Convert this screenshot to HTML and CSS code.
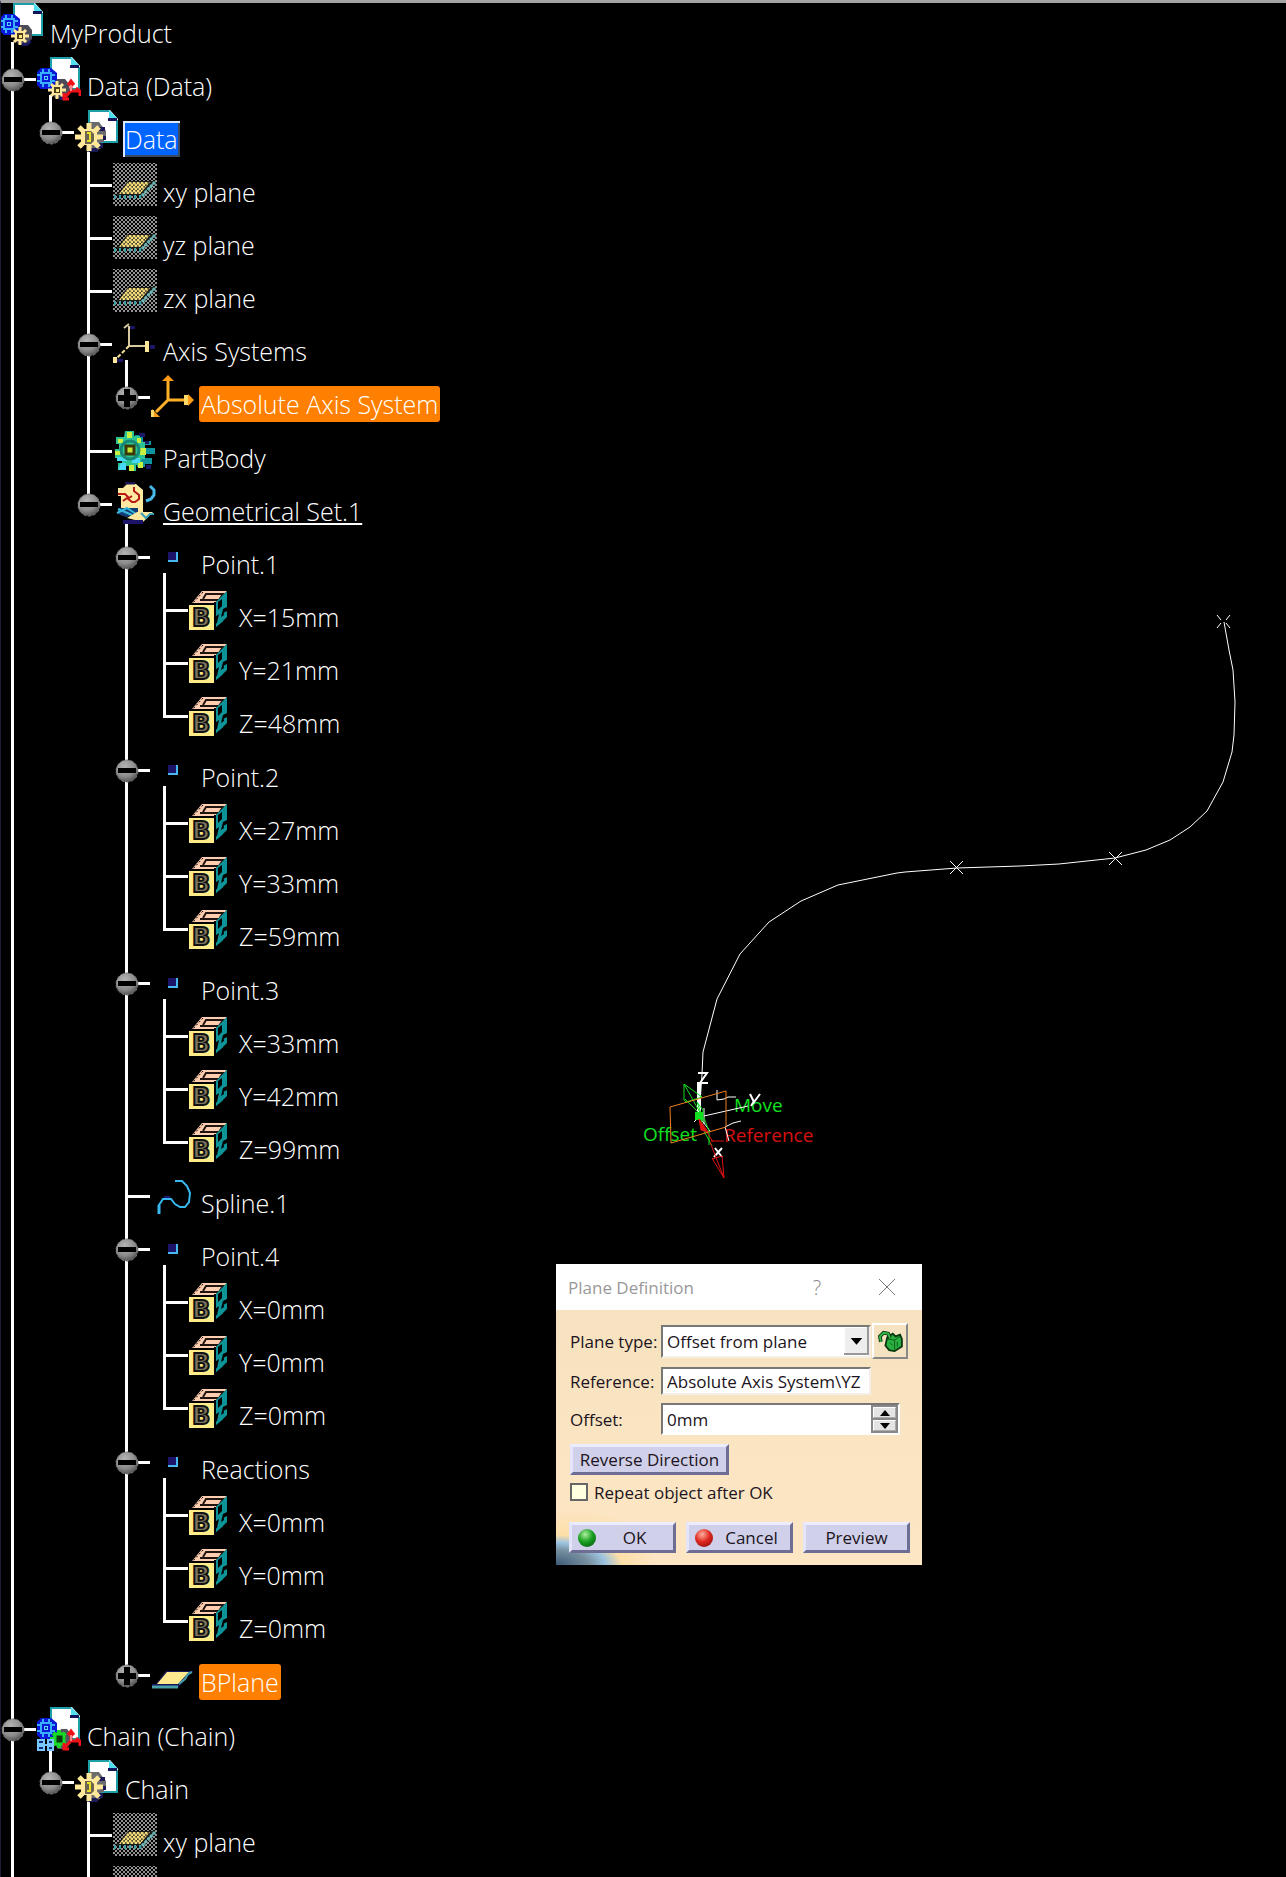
FILE: index.html
```html
<!DOCTYPE html>
<html lang="en">
<head>
<meta charset="utf-8">
<title>MyProduct</title>
<link rel="stylesheet" href="styles.css">
</head>
<body>
<svg class="defs" aria-hidden="true">
  <defs>
    <radialGradient id="steel" cx="40%" cy="30%" r="75%">
      <stop offset="0" stop-color="#b4b4b4"/><stop offset=".6" stop-color="#8c8c8c"/><stop offset="1" stop-color="#4c4c4c"/>
    </radialGradient>
    <pattern id="dots" width="4" height="4" patternUnits="userSpaceOnUse">
      <circle cx="1" cy="1" r="1" fill="#c4c4c4"/><circle cx="3" cy="3" r="1" fill="#c4c4c4"/>
    </pattern>
    <pattern id="holes" width="4" height="4" patternUnits="userSpaceOnUse">
      <rect width="4" height="4" fill="#4c4630"/><circle cx="1" cy="1" r="1.4" fill="#f4dc78"/><circle cx="3" cy="3" r="1.4" fill="#f4dc78"/>
    </pattern>
    <symbol id="minus" viewBox="0 0 24 24">
      <circle cx="12" cy="12" r="11" fill="url(#steel)" stroke="#777" stroke-dasharray="3 2"/>
      <rect x="3" y="9" width="18" height="5" fill="#000"/>
    </symbol>
    <symbol id="plus" viewBox="0 0 24 24">
      <circle cx="12" cy="12" r="11" fill="url(#steel)" stroke="#777" stroke-dasharray="3 2"/>
      <path d="M9 3h6v6h6v6h-6v6H9v-6H3V9h6z" fill="#000"/>
    </symbol>
    <symbol id="sheet" viewBox="0 0 44 44">
      <path d="M13 0h22l8 9v24H13z" fill="#fff"/>
      <path d="M14 33V1h20" fill="none" stroke="#1d9fa8" stroke-width="2"/>
      <path d="M42 10v22H14" fill="none" stroke="#1d9fa8" stroke-width="2"/>
      <path d="M34 0l9 9h-9z" fill="#4fe0f0"/>
      <path d="M33 8h9v3h-9z" fill="#14145a"/>
    </symbol>
    <symbol id="bluegear" viewBox="0 0 44 44">
      <path d="M4 11h10l6 5v11l-6 5H4l-5-5V16z" fill="#0818d8"/>
      <path d="M4 16h10v10H4zM6 12v4M12 12v4M6 26v4M12 26v4M0 18h4M0 24h4M14 18h4M14 24h4" fill="none" stroke="#38b0ff" stroke-width="2"/>
      <rect x="7" y="19" width="4" height="4" fill="#58d8ff"/>
      <rect x="8" y="20" width="2" height="2" fill="#0818d8"/>
    </symbol>
    <symbol id="goldgear" viewBox="0 0 44 44">
      <path d="M20 22h8l4 5v9l-5 5h-9l-4-6z" fill="#4c4c58"/>
      <path d="M22 40h5l4-4v4l-4 3h-5z" fill="#1a1a60"/>
      <path d="M20 24v18M11 33h18M14 27l12 12M26 27L14 39" stroke="#ffe89a" stroke-width="3"/>
      <rect x="15" y="28" width="10" height="10" fill="#ffe89a"/>
      <rect x="17" y="30" width="6" height="6" fill="#4a3c20"/>
      <rect x="19" y="32" width="3" height="3" fill="#ffe97a"/>
    </symbol>
    <symbol id="product" viewBox="0 0 44 44">
      <use href="#sheet"/><use href="#bluegear"/><use href="#goldgear"/>
    </symbol>
    <symbol id="redaxis" viewBox="0 0 44 44">
      <path d="M34 25v9l-6 6M34 34h8M31 28l3-4 3 4M39 31l4 3v5M27 36v6h5" fill="none" stroke="#f01018" stroke-width="3"/>
      <path d="M34 28v6" stroke="#fff" stroke-width="1"/>
    </symbol>
    <symbol id="dataproduct" viewBox="0 0 44 44">
      <use href="#product"/><use href="#redaxis"/>
    </symbol>
    <symbol id="chainproduct" viewBox="0 0 44 44">
      <use href="#sheet"/><use href="#bluegear"/>
      <path d="M24 22h6l4 5v9l-5 6h-8l-4-6z" fill="#55555f"/>
      <path d="M22 23v18M13 32h9M16 26l12 12M28 26L16 38" stroke="#18d828" stroke-width="4"/>
      <rect x="18" y="27" width="9" height="10" fill="#0a3a10" stroke="#18d828" stroke-width="3"/>
      <use href="#redaxis"/>
      <path d="M1 33h6v4H1zM11 33h5v4h-5zM1 39h6v4H1zM11 39h5v4h-5zM6 38h5" fill="#0c2c80" stroke="#78c8ff" stroke-width="2"/>
    </symbol>
    <symbol id="part" viewBox="0 0 44 44">
      <use href="#sheet"/>
      <path d="M14 12h10l3 4 4 5v5h-2v6h-3v6l-6 4h-8z" fill="#6c6c6c"/>
      <path d="M24 17h6v4h-6zM25 26h6v4h-6zM22 33h6v5h-6zM14 38h9v4h-9z" fill="#1a1a58"/>
      <path d="M14 13v28M0 27h28M4 17l20 20M24 17L4 37" stroke="#ffe89a" stroke-width="5"/>
      <rect x="6" y="19" width="16" height="16" fill="#ffe89a"/>
      <path d="M10 21h6l3 3v7l-3 3h-6z" fill="#6c6450"/>
      <path d="M12 23h3v8h-3" fill="none" stroke="#e8e020" stroke-width="2"/>
    </symbol>
    <symbol id="hiddenplane" viewBox="0 1 44 44">
      <rect width="44" height="44" fill="url(#dots)"/>
      <path d="M15 19h27l-14 15H3z" fill="#1c1c1c"/>
      <path d="M15 20h22L27 32H6z" fill="url(#holes)"/>
      <path d="M42 20L28 35" stroke="#68b8b8" stroke-width="3" stroke-dasharray="3 1"/>
      <path d="M1 35h27" stroke="#3aa0a4" stroke-width="4" stroke-dasharray="2 3"/>
    </symbol>
    <symbol id="axis" viewBox="0 0 44 44">
      <path d="M16 4v20h19M11 6l5-4" fill="none" stroke="#d8c8a0" stroke-width="2"/>
      <path d="M16 24L3 37" stroke="#f0dc98" stroke-width="2" stroke-dasharray="4 2"/>
      <path d="M17 4h5v3h-5zM37 23h5v4h-5zM4 37h6v3H4z" fill="#1c1668"/>
      <path d="M32 19h4v11h-4zM0 35h4v6H0z" fill="#ffe89a"/>
    </symbol>
    <symbol id="absaxis" viewBox="0 0 44 44">
      <path d="M17 4v21h20M17 25L5 37" fill="none" stroke="#ffb028" stroke-width="3"/>
      <path d="M11 6l6-6 6 6zM37 19l6 6-6 6zM1 42v-8l8 8z" fill="#ff9c18"/>
      <path d="M33 20h4v10h-4zM0 35h3v7H0z" fill="#ffd868"/>
    </symbol>
    <symbol id="body" viewBox="0 0 44 44">
      <path d="M22 6h8v6h8v4h-6v3h10v6H32v4h7v6h-7v3h-8z" fill="#0e949c"/>
      <path d="M26 4h6v4h-6zM30 12h6v3h-6zM33 36h5v4h-5z" fill="#1a1a68"/>
      <path d="M12 2h9v5h6v6h5v17h-4v6h-5v6h-6v-5h-4v4H5v-7h4v-5H2v-9h4v-5H3V8h8z" fill="#2cc494"/>
      <path d="M14 3h5v6h-5zM5 10h5v4H5zM24 9h4v5h-4zM27 19h6v7h-6zM25 33h5v6h-5zM16 36h5v6h-5zM2 22h5v4H2z" fill="#c8f040"/>
      <path d="M4 28h10v4H4zM8 34h5v7H5zM19 29h8v5h-8z" fill="#48d8f8"/>
      <circle cx="17" cy="21" r="9" fill="none" stroke="#178878" stroke-width="3"/>
      <rect x="13" y="17" width="8" height="8" fill="#c8e838" stroke="#3a3a08" stroke-width="3"/>
    </symbol>
    <symbol id="geoset" viewBox="0 0 44 44">
      <path d="M5 6h5l4-4h9l7 6v23H8V14H5z" fill="#ffe9a0"/>
      <path d="M12 1h10" stroke="#1c1450" stroke-width="3"/>
      <path d="M5 12h7l4 4 3-2M21 5v4l5 4v4l-4 3h-3l-5-4-4 3" fill="none" stroke="#b81818" stroke-width="2"/>
      <path d="M5 26h20v6l-12 3-8-3z" fill="#143c78"/>
      <path d="M4 31l10-5 12 8M5 27l14 6" fill="none" stroke="#38b8d8" stroke-width="2"/>
      <path d="M14 36l10-6h16l-10 10z" fill="#ffe9a0"/>
      <path d="M28 31l5 5 4-4h4" fill="none" stroke="#38a0b8" stroke-width="2"/>
      <path d="M10 40h20" stroke="#1c1468" stroke-width="4"/>
      <path d="M37 4l4 4v5l-3 4-5 2" fill="none" stroke="#48b8e8" stroke-width="3"/>
    </symbol>
    <symbol id="point" viewBox="0 0 44 44">
      <rect x="17" y="17" width="10" height="10" fill="#48b8f0"/>
      <rect x="17" y="17" width="8" height="8" fill="#1c1468"/>
    </symbol>
    <symbol id="param" viewBox="0 -1 44 44">
      <path d="M3 14L13 2h25L26 14z" fill="#ffcdb0"/>
      <path d="M14 3L3 15" stroke="#000" stroke-dasharray="2 2"/>
      <path d="M14 10l3-5h17l-4 6H11" fill="none" stroke="#201410" stroke-width="2"/>
      <path d="M26 14L38 2v27L26 39z" fill="#0c9498"/>
      <path d="M33 10v7l-4 4v-8zM34 20l-2 8 3-2zM38 18l-4 2v4l4-2zM26 28l4-3-2 9-2 1zM34 32l4-4v6h-4z" fill="#000"/>
      <path d="M26 13v27" stroke="#000" stroke-width="2"/>
      <rect x="0" y="16" width="25" height="25" fill="#ffec88"/>
      <text class="param-letter" x="3" y="37">B</text>
    </symbol>
    <symbol id="spline" viewBox="0 0 44 44">
      <path d="M8 38v-7l4-6h8l4 5 5 3h5l4-5 1-9-3-7-5-5h-7" fill="none" stroke="#38b8f0" stroke-width="2"/>
      <path d="M8 40v-9" stroke="#38b8f0" stroke-width="3"/>
      <path d="M13 23h6" stroke="#1c1c78" stroke-width="2"/>
    </symbol>
    <symbol id="plane" viewBox="0 0 44 44">
      <path d="M15 18h27L27 35H1v-4h4z" fill="#16165a"/>
      <path d="M16 19h22L27 31H6z" fill="#ffe98c"/>
      <path d="M41 19l-4 2-3 5-6 5" fill="none" stroke="#48a0a8" stroke-width="2"/>
      <path d="M1 34h26" stroke="#48a0a8" stroke-width="3"/>
    </symbol>
  </defs>
</svg>

<main class="workspace">
  <nav class="tree" aria-label="Specification tree">
    <div class="row root"><svg class="icon"><use href="#product"/></svg><span class="label">MyProduct</span></div>
    <ul>
      <li>
        <div class="row"><svg class="toggle"><use href="#minus"/></svg><svg class="icon"><use href="#dataproduct"/></svg><span class="label">Data (Data)</span></div>
        <ul>
          <li>
            <div class="row"><svg class="toggle"><use href="#minus"/></svg><svg class="icon"><use href="#part"/></svg><span class="label selected">Data</span></div>
            <ul>
              <li><div class="row leaf"><svg class="icon"><use href="#hiddenplane"/></svg><span class="label">xy plane</span></div></li>
              <li><div class="row leaf"><svg class="icon"><use href="#hiddenplane"/></svg><span class="label">yz plane</span></div></li>
              <li><div class="row leaf"><svg class="icon"><use href="#hiddenplane"/></svg><span class="label">zx plane</span></div></li>
              <li>
                <div class="row"><svg class="toggle"><use href="#minus"/></svg><svg class="icon"><use href="#axis"/></svg><span class="label">Axis Systems</span></div>
                <ul>
                  <li><div class="row"><svg class="toggle"><use href="#plus"/></svg><svg class="icon"><use href="#absaxis"/></svg><span class="label picked">Absolute Axis System</span></div></li>
                </ul>
              </li>
              <li><div class="row leaf"><svg class="icon"><use href="#body"/></svg><span class="label">PartBody</span></div></li>
              <li>
                <div class="row"><svg class="toggle"><use href="#minus"/></svg><svg class="icon"><use href="#geoset"/></svg><span class="label current">Geometrical Set.1</span></div>
                <ul>
                  <li>
                    <div class="row"><svg class="toggle"><use href="#minus"/></svg><svg class="icon"><use href="#point"/></svg><span class="label">Point.1</span></div>
                    <ul>
                      <li><div class="row leaf"><svg class="icon"><use href="#param"/></svg><span class="label">X=15mm</span></div></li>
                      <li><div class="row leaf"><svg class="icon"><use href="#param"/></svg><span class="label">Y=21mm</span></div></li>
                      <li><div class="row leaf"><svg class="icon"><use href="#param"/></svg><span class="label">Z=48mm</span></div></li>
                    </ul>
                  </li>
                  <li>
                    <div class="row"><svg class="toggle"><use href="#minus"/></svg><svg class="icon"><use href="#point"/></svg><span class="label">Point.2</span></div>
                    <ul>
                      <li><div class="row leaf"><svg class="icon"><use href="#param"/></svg><span class="label">X=27mm</span></div></li>
                      <li><div class="row leaf"><svg class="icon"><use href="#param"/></svg><span class="label">Y=33mm</span></div></li>
                      <li><div class="row leaf"><svg class="icon"><use href="#param"/></svg><span class="label">Z=59mm</span></div></li>
                    </ul>
                  </li>
                  <li>
                    <div class="row"><svg class="toggle"><use href="#minus"/></svg><svg class="icon"><use href="#point"/></svg><span class="label">Point.3</span></div>
                    <ul>
                      <li><div class="row leaf"><svg class="icon"><use href="#param"/></svg><span class="label">X=33mm</span></div></li>
                      <li><div class="row leaf"><svg class="icon"><use href="#param"/></svg><span class="label">Y=42mm</span></div></li>
                      <li><div class="row leaf"><svg class="icon"><use href="#param"/></svg><span class="label">Z=99mm</span></div></li>
                    </ul>
                  </li>
                  <li><div class="row leaf"><svg class="icon"><use href="#spline"/></svg><span class="label">Spline.1</span></div></li>
                  <li>
                    <div class="row"><svg class="toggle"><use href="#minus"/></svg><svg class="icon"><use href="#point"/></svg><span class="label">Point.4</span></div>
                    <ul>
                      <li><div class="row leaf"><svg class="icon"><use href="#param"/></svg><span class="label">X=0mm</span></div></li>
                      <li><div class="row leaf"><svg class="icon"><use href="#param"/></svg><span class="label">Y=0mm</span></div></li>
                      <li><div class="row leaf"><svg class="icon"><use href="#param"/></svg><span class="label">Z=0mm</span></div></li>
                    </ul>
                  </li>
                  <li>
                    <div class="row"><svg class="toggle"><use href="#minus"/></svg><svg class="icon"><use href="#point"/></svg><span class="label">Reactions</span></div>
                    <ul>
                      <li><div class="row leaf"><svg class="icon"><use href="#param"/></svg><span class="label">X=0mm</span></div></li>
                      <li><div class="row leaf"><svg class="icon"><use href="#param"/></svg><span class="label">Y=0mm</span></div></li>
                      <li><div class="row leaf"><svg class="icon"><use href="#param"/></svg><span class="label">Z=0mm</span></div></li>
                    </ul>
                  </li>
                  <li><div class="row"><svg class="toggle"><use href="#plus"/></svg><svg class="icon"><use href="#plane"/></svg><span class="label picked">BPlane</span></div></li>
                </ul>
              </li>
            </ul>
          </li>
        </ul>
      </li>
      <li class="more">
        <div class="row"><svg class="toggle"><use href="#minus"/></svg><svg class="icon"><use href="#chainproduct"/></svg><span class="label">Chain (Chain)</span></div>
        <ul>
          <li>
            <div class="row"><svg class="toggle"><use href="#minus"/></svg><svg class="icon"><use href="#part"/></svg><span class="label">Chain</span></div>
            <ul>
              <li><div class="row leaf"><svg class="icon"><use href="#hiddenplane"/></svg><span class="label">xy plane</span></div></li>
              <li class="more"><div class="row leaf"><svg class="icon"><use href="#hiddenplane"/></svg></div></li>
            </ul>
          </li>
        </ul>
      </li>
    </ul>
  </nav>

  <svg class="scene" viewBox="632 600 620 600" role="img" aria-label="Spline and reference plane">
    <polyline class="curve" points="1224,622 1229,650 1233,670 1235,702 1234,735 1232,752 1223,782 1207,811 1190,827 1170,840 1146,850 1115,858 1059,864 1020,866 957,868 905,872 897,873 838,885 801,901 769,922 740,954 717,999 703,1052 702,1074 699,1118"/>
    <path class="cross" d="M1217 615l4 5M1230 615l-4 5M1217 628l4-5M1230 628l-4-5M950 861l13 13M963 861l-13 13M1109 852l13 13M1122 852l-13 13"/>
    <text class="green-text" x="643" y="1141">Offset</text>
    <text class="green-text" x="734" y="1112">Move</text>
    <text class="red-text" x="724" y="1142">Reference</text>
    <path class="axes" d="M699 1082v36"/>
    <path class="cross" d="M694 1122l6-6M704 1116l44-10M717 1090v10l7-1 4-2h8M725 1127l8-4 8-2M725 1127l4 14M704 1108v16M700 1118l10 13"/>
    <path class="letters" d="M698 1073h9l-7 10h8M750 1094l4 8 6-8M754 1101l-3 5M715 1148l7 9M722 1148l-8 9"/>
    <path class="green" d="M684 1084v16l2 2 16-5-18-13 18 32-17-17M688 1102l14 14-5-14 6 8v12M700 1116l4 15 8 15M704 1118l5 13v14"/>
    <path class="spot" d="M695 1112h8v8h-8z"/>
    <path class="red" d="M710 1142l14 36M712 1158l12 20-2-22-10 3M711 1141h13M707 1132l6 10"/>
    <path class="red-head" d="M699 1119l9 13-7-2z"/>
    <path class="frame" d="M670 1107L726 1091V1127L671 1143z"/>
  </svg>

  <form class="dialog" aria-labelledby="dialog-title">
    <header class="titlebar">
      <h1 id="dialog-title">Plane Definition</h1>
      <button type="button" class="caption">?</button>
      <button type="button" class="caption close" aria-label="Close"><svg viewBox="0 0 16 16"><path d="M0 0l16 16M16 0L0 16"/></svg></button>
    </header>
    <div class="content">
      <div class="field type">
        <label for="type">Plane type:</label>
        <span class="combo"><select id="type"><option>Offset from plane</option></select><svg class="arrow" viewBox="0 0 26 28"><path d="M7 11h12l-6 7z"/></svg></span>
        <button type="button" class="lock" aria-label="Lock">
          <svg viewBox="0 0 28 24"><path d="M11 8l6-4 3 3 5-2 2 5v8l-8 5-6-1-4-5z" fill="#28b040" stroke="#0c3812" stroke-width="2"/><path d="M19 11v10M12 10l7 1 6-4M14 14l3 3M22 13v5" stroke="#105818" fill="none"/><path d="M4 13l-1-6 4-4 5 1 2 5" fill="none" stroke="#0c3812" stroke-width="4"/><path d="M4 13l-1-6 4-4 5 1 2 5" fill="none" stroke="#34b844" stroke-width="2"/></svg>
        </button>
      </div>
      <div class="field reference">
        <label for="reference">Reference:</label>
        <input id="reference" type="text" value="Absolute Axis System\YZ">
      </div>
      <div class="field offset">
        <label for="offset">Offset:</label>
        <span class="spin"><input id="offset" type="text" value="0mm"><span class="steps"><button type="button" aria-label="Increase"><svg viewBox="0 0 10 6"><path d="M0 6l5-6 5 6z"/></svg></button><button type="button" aria-label="Decrease"><svg viewBox="0 0 10 6"><path d="M0 0l5 6 5-6z"/></svg></button></span></span>
      </div>
      <button type="button" class="push reverse">Reverse Direction</button>
      <label class="repeat"><input type="checkbox">Repeat object after OK</label>
      <div class="actions">
        <button type="button" class="push"><span class="lamp ok"></span><span class="caption-text">OK</span></button>
        <button type="button" class="push"><span class="lamp cancel"></span><span class="caption-text">Cancel</span></button>
        <button type="button" class="push"><span class="caption-text">Preview</span></button>
      </div>
    </div>
  </form>
</main>
</body>
</html>
```
FILE: styles.css
```css
* { box-sizing: border-box; }
body { margin: 0; background: #000; }
.defs { position: absolute; width: 0; height: 0; }

.workspace {
  position: relative;
  height: 100vh;
  overflow: hidden;
  border-top: 3px solid #a4a4a4;
  border-left: 1px solid #1c1c34;
  background: #000;
  font-family: "Open Sans", "Noto Sans", sans-serif;
}

/* Specification tree */
.tree { margin-left: -1px; color: #fff; font-size: 25px; font-weight: 300; }
.tree ul { margin: 0; padding: 0; list-style: none; }
.tree li {
  background: linear-gradient(#fff, #fff) 11px 0 / 3px 100% no-repeat;
}
.tree li:not(:last-child):has(> ul) { padding-bottom: 1px; }
.tree li:last-child { background-size: 3px 39px; }
.tree li.more { background-size: 3px 100%; }
.tree li > ul { margin-left: 38px; }
.row {
  display: flex;
  align-items: flex-start;
  height: 53px;
  background: linear-gradient(#fff, #fff) 11px 36px / 25px 3px no-repeat;
}
.row.root { height: 39px; background: none; }
.toggle { flex: none; width: 24px; height: 24px; margin: 26px 12px 0 1px; }
.icon { flex: none; width: 44px; height: 44px; margin-top: 15px; overflow: visible; }
.leaf .icon { margin-left: 37px; }
.root .icon { margin-top: 0; }
.label {
  margin: 26px 0 0 4px;
  padding: 0 2px;
  line-height: 36px;
  white-space: nowrap;
}
.root .label { margin-top: 12px; }
.selected { background: #0064ff; box-shadow: inset 2px 2px #dce8ff, inset -2px -2px #3c4a60; }
.picked { background: #ff8000; border-radius: 3px; }
.current {
  text-decoration: underline;
  text-decoration-thickness: 2px;
  text-decoration-skip-ink: none;
  text-underline-offset: 2px;
}
.param-letter {
  font: bold 24px "DejaVu Sans", sans-serif;
  fill: #7c7660;
  stroke: #111;
  stroke-width: 2px;
}

/* 3D view */
.scene { position: absolute; left: 631px; top: 597px; width: 620px; height: 600px; }
.scene path, .scene polyline { fill: none; stroke-width: 1; }
.scene .curve, .scene .cross { stroke: #fff; }
.scene .letters { stroke: #fff; stroke-width: 2; }
.scene .axes { stroke: #fff; stroke-width: 4; }
.scene .frame { stroke: #f08020; }
.scene .green { stroke: #10e020; }
.scene .spot { fill: #10e020; }
.scene .red { stroke: #e01010; }
.scene .red-head { fill: #e01010; stroke: #e01010; }
.scene text { font-size: 19px; }
.green-text { fill: #10e020; }
.red-text { fill: #d81010; }

/* Plane Definition window */
.dialog {
  position: absolute;
  left: 555px;
  top: 1261px;
  width: 366px;
  background:
    radial-gradient(ellipse 66px 30px at 0 100%, #3c5a78 0, #7890a0 50%, #9cc4e0 75%, transparent 100%),
    radial-gradient(ellipse 80px 56px at 20px 100%, #ffd684 0, transparent 100%),
    linear-gradient(#f6e2c0, #fde6c4);
  color: #1c1420;
  font-size: 17px;
}
.titlebar { display: flex; align-items: center; height: 46px; padding-left: 12px; background: #fff; }
.titlebar h1 { flex: 1; margin: 0; font-size: 17px; font-weight: 400; color: #999; }
.caption { width: 70px; height: 46px; padding: 0; border: 0; background: none; color: #888; font: 300 20px "Open Sans", sans-serif; }
.close svg { width: 16px; height: 16px; }
.close path { stroke: #777; fill: none; }
.content { padding: 13px 12px 12px 14px; }
.field { display: flex; align-items: center; }
.field label { flex: none; width: 91px; white-space: nowrap; }
.field input, .field select {
  width: 210px;
  height: 28px;
  padding: 0 4px;
  border: 2px solid;
  border-color: #777 #f4f0e8 #f4f0e8 #777;
  border-radius: 0;
  background: #fff;
  color: #1c1420;
  font: inherit;
}
.combo { position: relative; display: flex; }
.field select { height: 33px; appearance: none; }
.arrow {
  position: absolute;
  top: 2px;
  right: 2px;
  width: 25px;
  height: 28px;
  background: #eee;
  box-shadow: inset -2px -2px #999, inset 1px 1px #fff;
  pointer-events: none;
}
.lock {
  display: flex;
  align-items: center;
  justify-content: center;
  width: 36px;
  height: 36px;
  margin-left: 1px;
  padding: 0;
  border: 2px solid;
  border-color: #fff #888 #888 #fff;
  background: #f4e2c0;
}
.lock svg { width: 26px; height: 22px; }
.reference { margin-top: 8px; }
.offset { margin-top: 8px; }
.spin { display: flex; width: 239px; height: 32px; border: 2px solid; border-color: #777 #fff #fff #777; background: #fff; }
.spin input { flex: 1; width: 100px; height: 28px; border: 0; }
.steps { display: flex; flex-direction: column; gap: 2px; width: 27px; padding: 2px; background: #888; }
.steps button { flex: 1; display: flex; align-items: center; justify-content: center; padding: 0; border: 1px solid; border-color: #fff #aaa #aaa #fff; background: #e4e4e4; }
.steps svg { width: 10px; height: 6px; }
.push {
  display: flex;
  align-items: center;
  justify-content: center;
  height: 31px;
  padding: 0;
  border: 3px solid;
  border-color: #ececff #6e6e94 #6e6e94 #e4e4fa;
  background: #d0d0ea;
  color: #1c1420;
  font: inherit;
}
.reverse { width: 159px; margin-top: 9px; }
.repeat { display: flex; align-items: center; gap: 6px; height: 22px; margin-top: 6px; }
.repeat input { appearance: none; width: 18px; height: 18px; margin: 0; border: 2px solid #666; background: #ffffe0; }
.actions { display: grid; grid-template-columns: repeat(3, 1fr); gap: 10px; margin: 19px 0 0 -1px; }
.lamp { flex: none; width: 18px; height: 18px; margin-left: 6px; border-radius: 50%; }
.ok { background: radial-gradient(circle at 40% 30%, #b0f0a0, #18a020 45%, #044a08); }
.cancel { background: radial-gradient(circle at 40% 30%, #ffb0a0, #e02820 45%, #780808); }
.caption-text { flex: 1; text-align: center; }
```
